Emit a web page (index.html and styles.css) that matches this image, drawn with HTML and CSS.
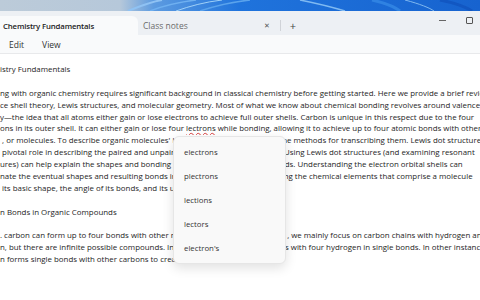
FILE: index.html
```html
<!DOCTYPE html>
<html lang="en">
<head>
  <meta charset="UTF-8">
  <meta name="viewport" content="width=device-width, initial-scale=1.0">
  <title>Chemistry Fundamentals - Notepad</title>
  <link rel="stylesheet" href="styles.css">
</head>
<body>
  <div class="wallpaper">
    <svg width="480" height="11" viewBox="0 0 480 11">
      <defs>
        <linearGradient id="wp" x1="0" y1="0" x2="1" y2="0">
          <stop offset="0" stop-color="#bccbd9"/>
          <stop offset="0.25" stop-color="#b6c8da"/>
          <stop offset="0.32" stop-color="#5d9be0"/>
          <stop offset="0.5" stop-color="#1f73dc"/>
          <stop offset="1" stop-color="#1763cf"/>
        </linearGradient>
      </defs>
      <rect width="480" height="11" fill="url(#wp)"/>
      <path d="M128 11 C140 6 150 2 162 0" stroke="#8fc2f3" stroke-width="2" fill="none"/>
      <path d="M150 11 C165 5 180 2 196 0" stroke="#6fb0f0" stroke-width="1.5" fill="none"/>
      <path d="M176 11 C190 6 205 2 222 0" stroke="#9fd0f7" stroke-width="1" fill="none"/>
      <path d="M200 11 C215 6 232 2 250 0" stroke="#5aa3ec" stroke-width="1.5" fill="none"/>
      <path d="M300 0 C320 4 335 8 345 11" stroke="#7fbaf2" stroke-width="1.5" fill="none"/>
      <path d="M372 0 C385 3 395 7 400 11" stroke="#2f82e2" stroke-width="3" fill="none"/>
      <path d="M405 0 C420 4 430 8 434 11" stroke="#7fb8f0" stroke-width="1" fill="none"/>
      <path d="M440 0 C455 3 466 7 472 11" stroke="#1257c2" stroke-width="3" fill="none"/>
    </svg>
  </div>

  <div class="window">
    <div class="tabstrip">
      <div class="tab active">Chemistry Fundamentals</div>
      <div class="tab">
        <span class="tab-title">Class notes</span>
        <span class="tab-close">&#x2715;</span>
      </div>
      <div class="tab-sep"></div>
      <div class="tab-add">+</div>
      <div class="caption">
        <span class="cap-min"></span>
        <span class="cap-max"></span>
      </div>
    </div>

    <div class="menubar">
      <span class="menu-item">Edit</span>
      <span class="menu-item">View</span>
    </div>

    <div class="editor">
      <div class="line">istry Fundamentals</div>
      <div class="line"> </div>
      <div class="line">ng with organic chemistry requires significant background in classical chemistry before getting started. Here we provide a brief review</div>
      <div class="line">ce shell theory, Lewis structures, and molecular geometry. Most of what we know about chemical bonding revolves around valence shell</div>
      <div class="line">y—the idea that all atoms either gain or lose electrons to achieve full outer shells. Carbon is unique in this respect due to the four</div>
      <div class="line">ons in its outer shell. It can either gain or lose four <span class="typo">lectrons</span> while bonding, allowing it to achieve up to four atomic bonds with other</div>
      <div class="line"> , or molecules. To describe organic molecules' b<span class="covered">onding, we discuss a few of t</span>he methods for transcribing them. Lewis dot structures</div>
      <div class="line"> pivotal role in describing the paired and unpair<span class="covered">ed electrons within molecule. </span>Using Lewis dot structures (and examining resonant</div>
      <div class="line">ures) can help explain the shapes and bonding p<span class="covered">atterns of different com</span>pounds. Understanding the electron orbital shells can</div>
      <div class="line">nate the eventual shapes and resulting bonds in<span class="covered"> molecules, simply by obser</span>ving the chemical elements that comprise a molecule</div>
      <div class="line"> its basic shape, the angle of its bonds, and its u<span class="covered">nique traits.</span></div>
      <div class="line"> </div>
      <div class="line">n Bonds in Organic Compounds</div>
      <div class="line"> </div>
      <div class="line">. carbon can form up to four bonds with other m<span class="covered">olecules. In this longer course</span>, we mainly focus on carbon chains with hydrogen and</div>
      <div class="line">n, but there are infinite possible compounds. In<span class="covered"> methane, a lone carbon bon</span>ds with four hydrogen in single bonds. In other instances</div>
      <div class="line">n forms single bonds with other carbons to create longer chains.</div>

      <ul class="suggestions">
        <li>electrons</li>
        <li>plectrons</li>
        <li>lections</li>
        <li>lectors</li>
        <li>electron's</li>
      </ul>
    </div>
  </div>
</body>
</html>
```

FILE: styles.css
```css
* {
  margin: 0;
  padding: 0;
  box-sizing: border-box;
}

body {
  width: 480px;
  height: 300px;
  overflow: hidden;
  background: #fff;
  font-family: "Open Sans", "Noto Sans", sans-serif;
  color: #1f1f1f;
}

.wallpaper {
  height: 11px;
  line-height: 0;
}

.window {
  background: #edf0f4;
}

/* tabs */

.tabstrip {
  display: flex;
  align-items: flex-end;
  height: 24px;
}

.tab {
  display: flex;
  align-items: center;
  height: 19px;
  width: 140px;
  padding-left: 5px;
  font-size: 8.5px;
  color: #6b6b6b;
}

.tab.active {
  width: 138px;
  padding-left: 3px;
  background: #f9fafb;
  border-radius: 0 6px 0 0;
  color: #1b1b1b;
  font-size: 7.8px;
  font-weight: 600;
  letter-spacing: -0.15px;
}

.tab-title {
  flex: 1;
}

.tab-close {
  width: 10px;
  margin-right: 4px;
  font-size: 7px;
  color: #555;
}

.tab-sep {
  width: 1px;
  height: 11px;
  margin: 0 4px 4px 2px;
  background: #d0d3d8;
}

.tab-add {
  height: 19px;
  line-height: 19px;
  width: 16px;
  text-align: center;
  font-size: 11px;
  color: #444;
}

.caption {
  display: flex;
  align-items: center;
  gap: 20px;
  height: 24px;
  margin-left: auto;
  padding-right: 7px;
  padding-bottom: 6px;
}

.cap-min {
  width: 7px;
  height: 1px;
  background: #666;
}

.cap-max {
  width: 7px;
  height: 7px;
  border: 1px solid #555;
  border-radius: 1px;
}

/* menu */

.menubar {
  display: flex;
  gap: 18px;
  height: 19px;
  align-items: center;
  padding-left: 9px;
  background: #f9fafb;
  border-bottom: 1px solid #e8e9eb;
  font-size: 8.5px;
  color: #333;
}

/* editor */

.editor {
  position: relative;
  height: 250px;
  background: #fff;
  padding-top: 10px;
  font-size: 7.9px;
  color: #1e1e1e;
}

.line {
  white-space: pre;
  line-height: 11.9px;
  height: 11.9px;
  overflow: hidden;
}

.covered {
  visibility: hidden;
}

.typo {
  text-decoration: underline wavy #d83b3b;
  text-decoration-thickness: 1px;
  text-underline-offset: 1px;
}

.suggestions {
  position: absolute;
  left: 173px;
  top: 82px;
  width: 113px;
  padding: 3px 0;
  list-style: none;
  background: #f9f9f9;
  border: 1px solid #e6e6e6;
  border-radius: 6px;
  box-shadow: 0 4px 12px rgba(0, 0, 0, 0.12);
}

.suggestions li {
  height: 24px;
  line-height: 24px;
  padding-left: 10px;
  font-size: 7.8px;
  color: #333;
}
```
